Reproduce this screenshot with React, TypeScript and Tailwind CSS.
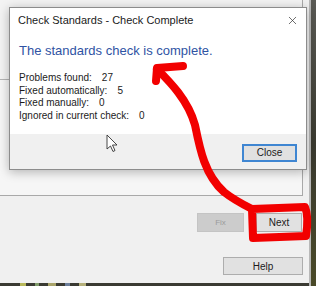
import { X } from 'lucide-react';

const font = { fontFamily: '"Liberation Sans", Arial, sans-serif' };

type Stat = { label: string; value: number };

const stats: Stat[] = [
    { label: 'Problems found:', value: 27 },
    { label: 'Fixed automatically:', value: 5 },
    { label: 'Fixed manually:', value: 0 },
    { label: 'Ignored in current check:', value: 0 },
];

// Dialog window that sits on top of the Check Standards panel
const CompleteDialog = () => (
    <div className="absolute left-[9px] top-[7px] w-[298px] h-[163px] flex flex-col bg-white border border-[#8c8c8c] shadow-[0_2px_10px_rgba(0,0,0,0.28)]">
        <div className="h-[25px] flex items-center justify-between pl-[8px] pr-[7px]">
            <span className="text-[11px] text-[#1b1b1b]">Check Standards - Check Complete</span>
            <X size={13} strokeWidth={1.3} className="text-[#333]" />
        </div>
        <div className="flex-1 flex flex-col pl-[9px]">
            <h1 className="mt-[8px] text-[13px] leading-[20px] text-[#2f53a3]">The standards check is complete.</h1>
            <ul className="mt-[11px] text-[10px] leading-[12.7px] text-[#1b1b1b]">
                {stats.map((s) => (
                    <li key={s.label}>
                        {s.label}
                        <span className="ml-[10px]">{s.value}</span>
                    </li>
                ))}
            </ul>
        </div>
        <div className="h-[35px] bg-[#f0f0f0] flex justify-end items-start pt-[10px] pr-[9px]">
            <button className="w-[55px] h-[18px] bg-[#e1e1e1] border-2 border-[#3f86d2] text-[10px] leading-none text-[#1b1b1b]">
                Close
            </button>
        </div>
    </div>
);

const Annotation = () => (
    <svg className="absolute inset-0 pointer-events-none" width="316" height="286" viewBox="0 0 316 286">
        <g fill="none" stroke="#f20000" strokeWidth="8" strokeLinecap="round" strokeLinejoin="round">
            <path d="M183 66 L157 68 L156 81" />
            <path d="M157 69 C170 82 188 100 195 125 C200 150 205 175 224 192 C234 200 244 205 252 209" />
            <path d="M252 209 L305 207 Q309 216 306 236 L253 238 Z" />
        </g>
        {/* mouse pointer */}
        <path
            d="M107 135 L107 149 L110.5 146 L113 151.5 L115 150.5 L112.5 145 L117 145 Z"
            fill="#fff"
            stroke="#333"
            strokeWidth="0.9"
            strokeLinejoin="round"
        />
    </svg>
);

export default function App() {
    return (
        <div className="relative w-[316px] h-[286px] overflow-hidden bg-[#f0f0f0] flex" style={font}>
            <div className="w-[309px] flex flex-col">
                {/* list panel of the underlying window */}
                <div className="h-[196px] w-[303px] flex flex-col bg-[#f3f3f3] border-r border-b border-[#a9a9a9]">
                    <div className="h-[80px] border-b border-[#b4b4b4]" />
                    <div className="flex-1 bg-[#f6f6f6]" />
                </div>
                <div className="mt-[17px] flex justify-end gap-[12px] pr-[7px]">
                    <button className="w-[47px] h-[19px] bg-[#cccccc] border border-[#c4c4c4] text-[8px] text-[#9b9b9b]">
                        Fix
                    </button>
                    <button className="w-[46px] h-[19px] bg-[#e1e1e1] border border-[#adadad] text-[10px] text-[#1b1b1b]">
                        Next
                    </button>
                </div>
                <div className="mt-[25px] flex justify-end pr-[6px]">
                    <button className="w-[80px] h-[18px] bg-[#e1e1e1] border border-[#adadad] text-[10px] text-[#1b1b1b]">
                        Help
                    </button>
                </div>
                <div className="mt-auto h-[3px] bg-[#3a3a32] flex gap-[9px] pl-[20px]">
                    <span className="w-[6px] bg-[#b8b85a]" />
                    <span className="w-[4px] bg-[#7f9a6a]" />
                    <span className="w-[8px] bg-[#a9a46a]" />
                    <span className="w-[5px] bg-[#6c7e9a]" />
                    <span className="w-[7px] bg-[#b5b07a]" />
                </div>
            </div>
            <div className="flex-1 flex">
                <div className="w-[2px] bg-[#b8b8b8]" />
                <div className="flex-1 bg-gradient-to-b from-[#5a5a55] via-[#3a3a30] to-[#4a4a28]" />
            </div>
            <CompleteDialog />
            <Annotation />
        </div>
    );
}
